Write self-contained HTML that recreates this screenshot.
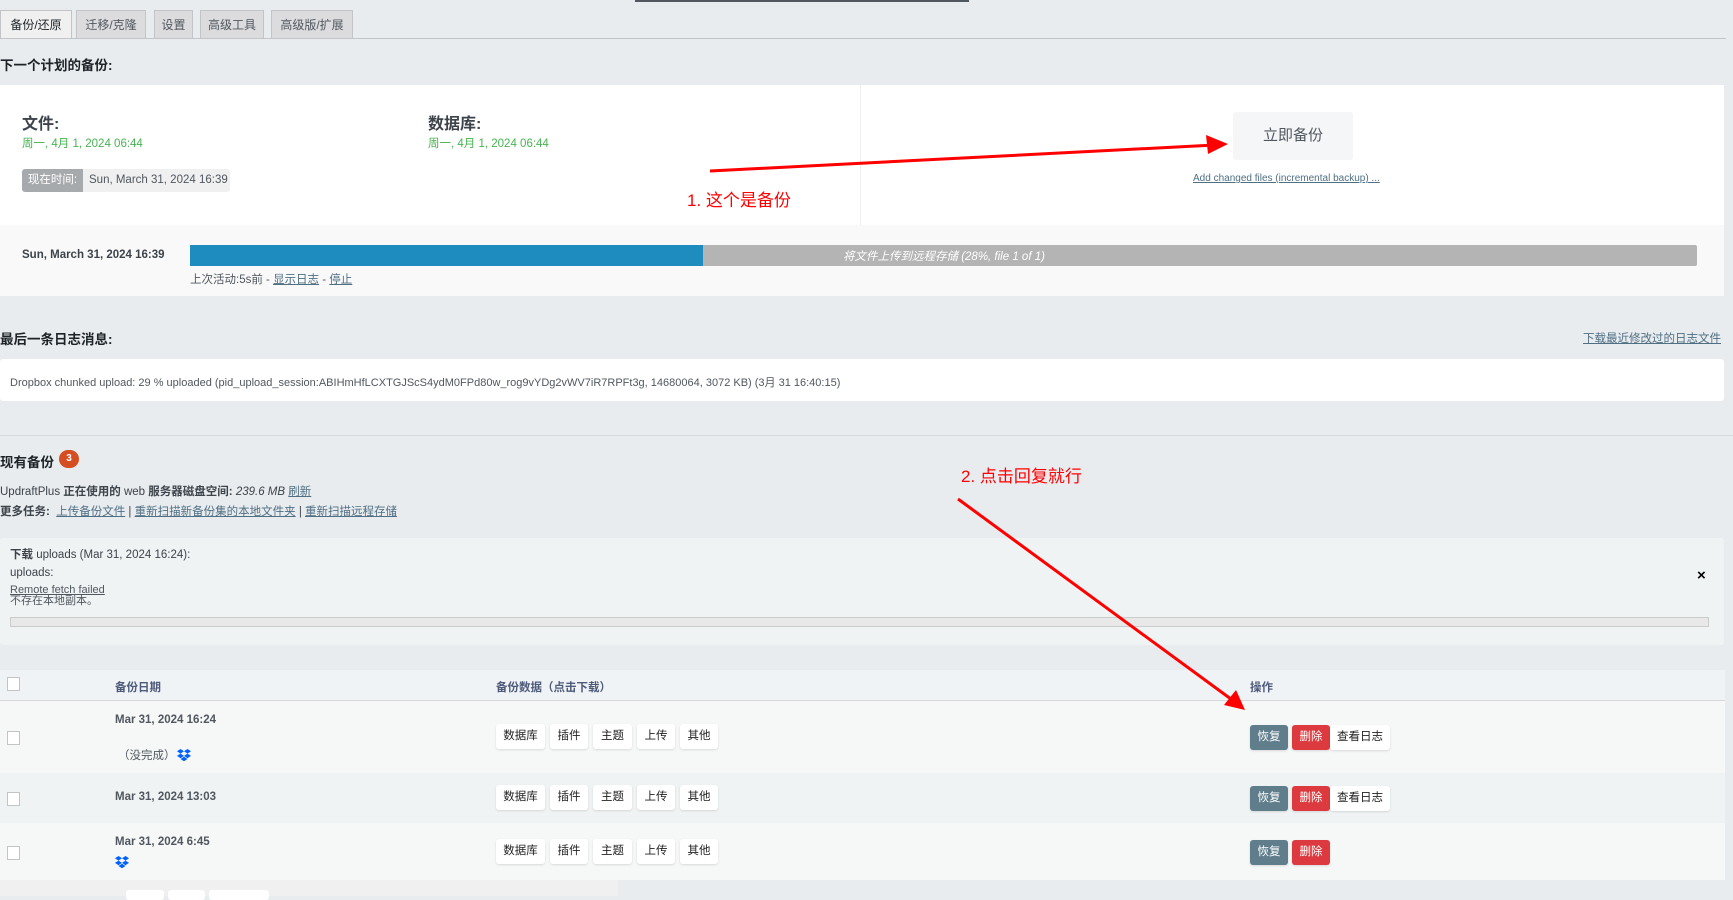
<!DOCTYPE html>
<html><head><meta charset="utf-8"><style>
*{box-sizing:border-box;margin:0;padding:0}
body{width:1733px;height:896px;overflow:hidden;background:#e9ecef;font-family:"Liberation Sans","Noto Sans CJK SC",sans-serif;font-size:12px;color:#3c434a;position:relative}
.a{position:absolute;white-space:nowrap}
.tab{position:absolute;top:10px;height:28px;background:#dcdcde;border:1px solid #c3c4c7;border-bottom:none;font-size:12px;color:#50575e;padding-top:5px;text-align:center}
.tab.on{background:#f0f0f1;color:#1d2327;height:29px}
a,.u{text-decoration:underline;color:#4f6f83}
.bt{position:absolute;height:25px;background:#fff;border-radius:3px;box-shadow:0 1px 2px rgba(0,0,0,.12);font-size:11.5px;color:#222;text-align:center;line-height:25px}
.cb{position:absolute;width:13px;height:14px;border:1px solid #c3c4c7;background:#fff}
.rs{background:#607d8b;color:#fff}.dl{background:#dc3a3f;color:#fff}
.db{position:absolute;width:14px;height:14px}
</style></head><body>
<div class="a" style="left:635px;top:0;width:334px;height:2px;background:#50575e"></div>
<div class="tab on" style="left:0;width:72px">备份/还原</div>
<div class="tab" style="left:76px;width:70px">迁移/克隆</div>
<div class="tab" style="left:154px;width:39px">设置</div>
<div class="tab" style="left:200px;width:64px">高级工具</div>
<div class="tab" style="left:271px;width:82px">高级版/扩展</div>
<div class="a" style="left:0;top:38px;width:1726px;height:1px;background:#c3c4c7"></div>

<div class="a" style="left:0;top:54px;font-size:13.5px;font-weight:bold;color:#1d2327">下一个计划的备份:</div>
<div class="a" style="left:0;top:85px;width:1724px;height:140px;background:#fff"></div>
<div class="a" style="left:860px;top:85px;width:1px;height:140px;background:#eee"></div>
<div class="a" style="left:22px;top:110px;font-size:16px;font-weight:bold;color:#3c434a">文件:</div>
<div class="a" style="left:22px;top:135px;font-size:11.5px;color:#46b450">周一, 4月 1, 2024 06:44</div>
<div class="a" style="left:428px;top:110px;font-size:16px;font-weight:bold;color:#3c434a">数据库:</div>
<div class="a" style="left:428px;top:135px;font-size:11.5px;color:#46b450">周一, 4月 1, 2024 06:44</div>
<div class="a" style="left:22px;top:169px;width:208px;height:23px;background:#f0f0f1;border-radius:3px"></div>
<div class="a" style="left:22px;top:169px;width:61px;height:23px;background:#a7aaad;border-radius:3px 0 0 3px;color:#fff;font-size:11.5px;line-height:23px;text-align:center">现在时间:</div>
<div class="a" style="left:89px;top:174px;font-size:11.5px;color:#50575e">Sun, March 31, 2024 16:39</div>
<div class="a" style="left:1233px;top:112px;width:120px;height:48px;background:#f5f6f7;border-radius:3px;font-size:15px;color:#50575e;text-align:center;line-height:48px">立即备份</div>
<div class="a u" style="left:1193px;top:173px;font-size:10px">Add changed files (incremental backup) ...</div>

<div class="a" style="left:0;top:225px;width:1724px;height:71px;background:#f9f9f9"></div>
<div class="a" style="left:22px;top:249px;font-size:11.5px;font-weight:bold;color:#3c434a">Sun, March 31, 2024 16:39</div>
<div class="a" style="left:190px;top:245px;width:1507px;height:21px;background:#b4b4b4;border-radius:0 2px 2px 0"></div>
<div class="a" style="left:190px;top:245px;width:513px;height:21px;background:#1e8cbe"></div>
<div class="a" style="left:843px;top:248px;font-size:11.5px;font-style:italic;color:#fff">将文件上传到远程存储 (28%, file 1 of 1)</div>
<div class="a" style="left:190px;top:271px;font-size:11.5px;color:#50575e">上次活动:5s前 - <span class="u">显示日志</span> - <span class="u">停止</span></div>

<div class="a" style="left:0;top:328px;font-size:13.5px;font-weight:bold;color:#1d2327">最后一条日志消息:</div>
<div class="a u" style="left:1583px;top:330px;font-size:11.5px">下载最近修改过的日志文件</div>
<div class="a" style="left:0;top:359px;width:1724px;height:42px;background:#fff;border-radius:3px"></div>
<div class="a" style="left:10px;top:374px;font-size:11px;color:#50575e">Dropbox chunked upload: 29 % uploaded (pid_upload_session:ABIHmHfLCXTGJScS4ydM0FPd80w_rog9vYDg2vWV7iR7RPFt3g, 14680064, 3072 KB) (3月 31 16:40:15)</div>
<div class="a" style="left:0;top:435px;width:1733px;height:1px;background:#d5d8dc"></div>

<div class="a" style="left:0;top:451px;font-size:13.5px;font-weight:bold;color:#1d2327">现有备份</div>
<div class="a" style="left:59px;top:450px;width:20px;height:18px;border-radius:9px;background:#d54e21;color:#fff;font-size:10px;font-weight:bold;text-align:center;line-height:18px">3</div>
<div class="a" style="left:0;top:483px;font-size:11.5px;color:#3c434a">UpdraftPlus <b>正在使用的</b> web <b>服务器磁盘空间:</b> <i>239.6 MB</i> <span class="u">刷新</span></div>
<div class="a" style="left:0;top:503px;font-size:11.5px;color:#3c434a"><b>更多任务:</b> &nbsp;<span class="u">上传备份文件</span> | <span class="u">重新扫描新备份集的本地文件夹</span> | <span class="u">重新扫描远程存储</span></div>

<div class="a" style="left:0;top:538px;width:1724px;height:107px;background:#f0f3f4;border-radius:3px"></div>
<div class="a" style="left:10px;top:546px;font-size:11.5px;color:#3c434a"><b>下载</b> uploads (Mar 31, 2024 16:24):</div>
<div class="a" style="left:10px;top:567px;font-size:11.5px;color:#3c434a">uploads:</div>
<div class="a" style="left:10px;top:585px;font-size:11px;color:#50575e;line-height:11px"><span class="u" style="color:#50575e">Remote fetch failed</span><br>不存在本地副本。</div>
<div class="a" style="left:10px;top:617px;width:1699px;height:10px;background:#e8e8e8;border:1px solid #ccc"></div>
<div class="a" style="left:1697px;top:567px;font-size:15px;font-weight:bold;color:#000">×</div>

<div class="a" style="left:0;top:670px;width:1725px;height:31px;background:#f0f3f5;border-bottom:1px solid #d5d8dc"></div>
<div class="cb" style="left:7px;top:677px"></div>
<div class="a" style="left:115px;top:679px;font-size:11.5px;font-weight:bold;color:#4d5a7a">备份日期</div>
<div class="a" style="left:496px;top:679px;font-size:11.5px;font-weight:bold;color:#4d5a7a">备份数据（点击下载）</div>
<div class="a" style="left:1250px;top:679px;font-size:11.5px;font-weight:bold;color:#4d5a7a">操作</div>
<div class="a" style="left:0;top:701px;width:1725px;height:72px;background:#f6f7f7"></div>
<div class="a" style="left:0;top:773px;width:1725px;height:50px;background:#f0f3f4"></div>
<div class="a" style="left:0;top:823px;width:1725px;height:57px;background:#f6f7f7"></div>

<div class="cb" style="left:7px;top:731px"></div>
<div class="a" style="left:115px;top:714px;font-size:11.5px;font-weight:bold;color:#50575e">Mar 31, 2024 16:24</div>
<div class="a" style="left:118px;top:747px;font-size:11.5px;color:#50575e">（没完成）</div>
<svg class="db" style="left:177px;top:748px" viewBox="0 0 14 14"><path fill="#0061fe" d="M3.5 1 0 3.3l3.5 2.3L7 3.3zm7 0L7 3.3l3.5 2.3L14 3.3zM0 7.9l3.5 2.3L7 7.9 3.5 5.6zm10.5-2.3L7 7.9l3.5 2.3L14 7.9zM3.5 11 7 13.3l3.5-2.3L7 8.7z"/></svg>
<div class="bt" style="left:496px;top:724px;width:49px">数据库</div><div class="bt" style="left:550px;top:724px;width:38px">插件</div><div class="bt" style="left:593px;top:724px;width:39px">主题</div><div class="bt" style="left:637px;top:724px;width:38px">上传</div><div class="bt" style="left:680px;top:724px;width:38px">其他</div>
<div class="bt rs" style="left:1250px;top:725px;width:38px">恢复</div><div class="bt dl" style="left:1292px;top:725px;width:38px">删除</div><div class="bt" style="left:1330px;top:725px;width:60px">查看日志</div>

<div class="cb" style="left:7px;top:792px"></div>
<div class="a" style="left:115px;top:791px;font-size:11.5px;font-weight:bold;color:#50575e">Mar 31, 2024 13:03</div>
<div class="bt" style="left:496px;top:785px;width:49px">数据库</div><div class="bt" style="left:550px;top:785px;width:38px">插件</div><div class="bt" style="left:593px;top:785px;width:39px">主题</div><div class="bt" style="left:637px;top:785px;width:38px">上传</div><div class="bt" style="left:680px;top:785px;width:38px">其他</div>
<div class="bt rs" style="left:1250px;top:786px;width:38px">恢复</div><div class="bt dl" style="left:1292px;top:786px;width:38px">删除</div><div class="bt" style="left:1330px;top:786px;width:60px">查看日志</div>

<div class="cb" style="left:7px;top:846px"></div>
<div class="a" style="left:115px;top:836px;font-size:11.5px;font-weight:bold;color:#50575e">Mar 31, 2024 6:45</div>
<svg class="db" style="left:115px;top:855px" viewBox="0 0 14 14"><path fill="#0061fe" d="M3.5 1 0 3.3l3.5 2.3L7 3.3zm7 0L7 3.3l3.5 2.3L14 3.3zM0 7.9l3.5 2.3L7 7.9 3.5 5.6zm10.5-2.3L7 7.9l3.5 2.3L14 7.9zM3.5 11 7 13.3l3.5-2.3L7 8.7z"/></svg>
<div class="bt" style="left:496px;top:839px;width:49px">数据库</div><div class="bt" style="left:550px;top:839px;width:38px">插件</div><div class="bt" style="left:593px;top:839px;width:39px">主题</div><div class="bt" style="left:637px;top:839px;width:38px">上传</div><div class="bt" style="left:680px;top:839px;width:38px">其他</div>
<div class="bt rs" style="left:1250px;top:840px;width:38px">恢复</div><div class="bt dl" style="left:1292px;top:840px;width:38px">删除</div>

<div class="a" style="left:0;top:880px;width:618px;height:16px;background:#f0f0f1"></div>
<div class="a" style="left:126px;top:890px;width:38px;height:10px;background:#fff;border-radius:3px"></div>
<div class="a" style="left:168px;top:890px;width:37px;height:10px;background:#fff;border-radius:3px"></div>
<div class="a" style="left:209px;top:890px;width:60px;height:10px;background:#fff;border-radius:3px"></div>

<svg class="a" style="left:0;top:0" width="1733" height="896">
<line x1="710" y1="171" x2="1215" y2="145" stroke="#f00" stroke-width="3"/>
<polygon points="1228,144 1206,135 1208,154" fill="#f00"/>
<line x1="958" y1="499" x2="1235" y2="702" stroke="#f00" stroke-width="3"/>
<polygon points="1245,710 1236,690 1224,705" fill="#f00"/>
</svg>
<div class="a" style="left:687px;top:186px;font-size:17px;color:#f00">1. 这个是备份</div>
<div class="a" style="left:961px;top:462px;font-size:17px;color:#f00">2. 点击回复就行</div>
</body></html>
